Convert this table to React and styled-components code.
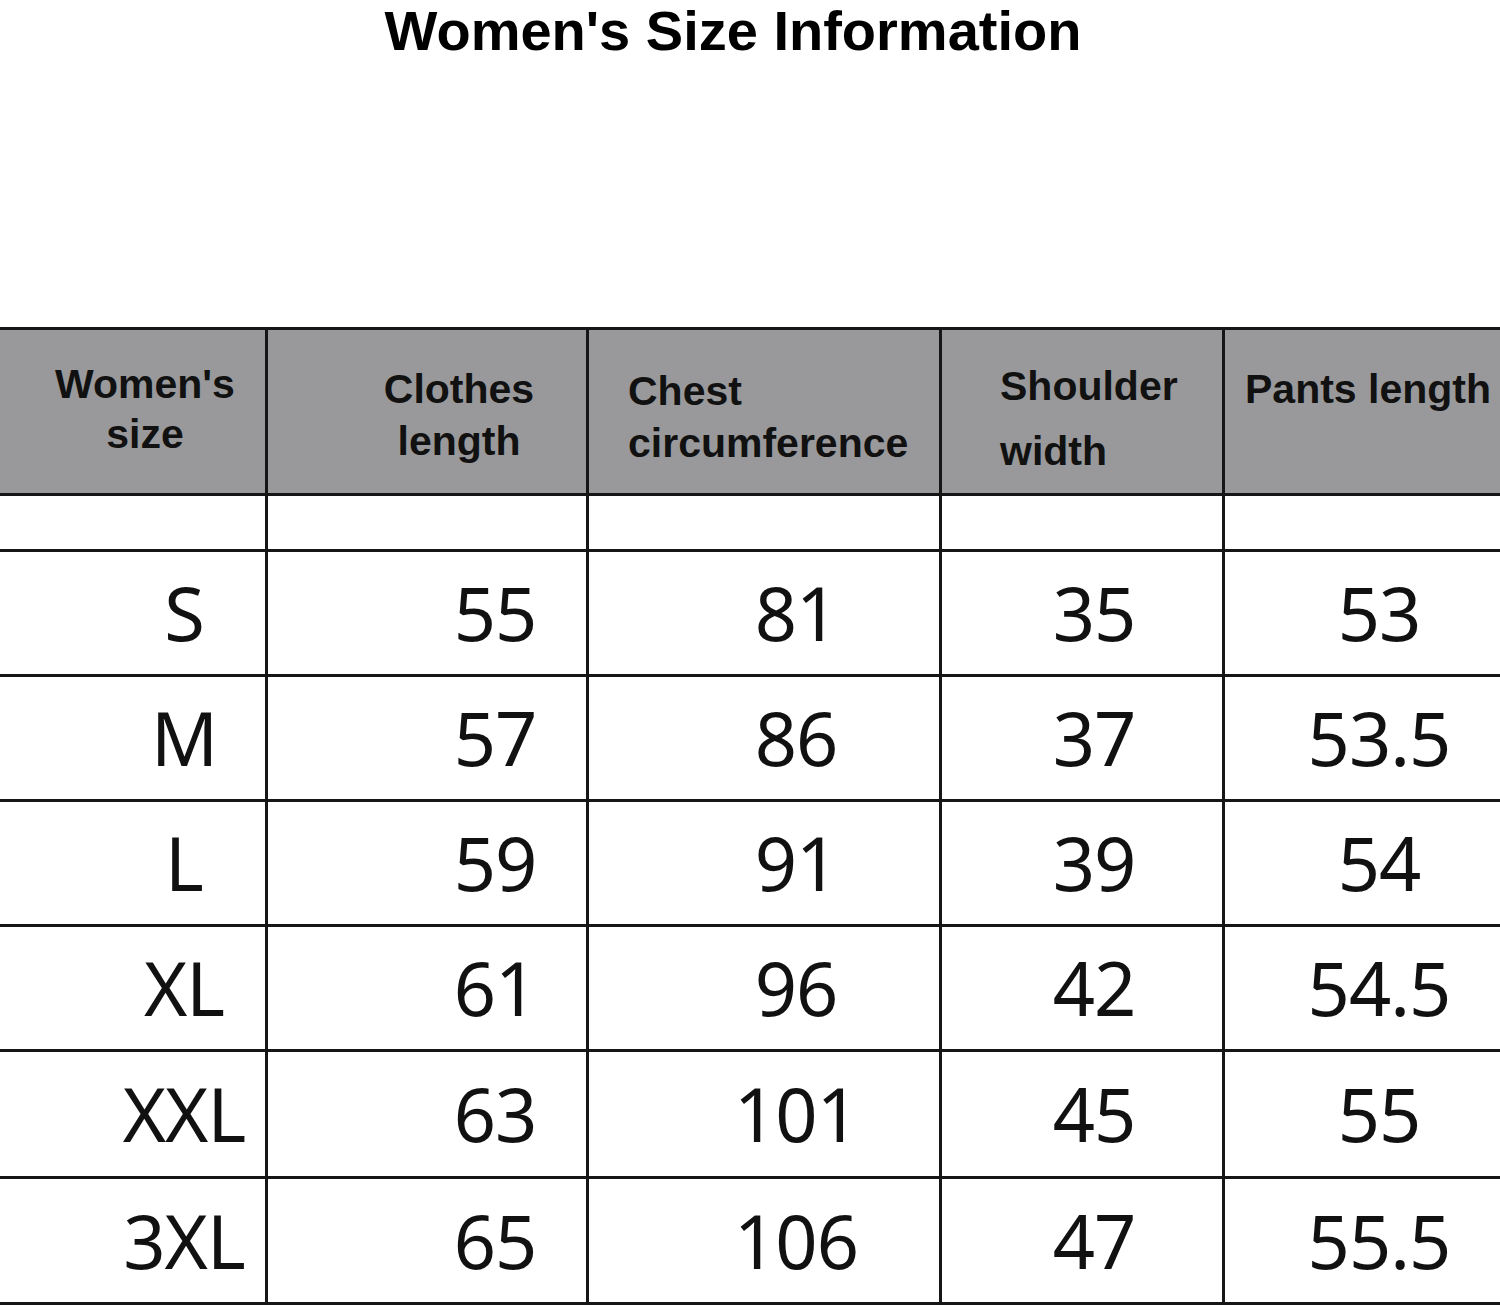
import React from 'react';
import styled, { createGlobalStyle } from 'styled-components';

const GlobalStyle = createGlobalStyle`
  body {
    margin: 0;
    background: #fff;
    font-family: "Liberation Sans", Arial, sans-serif;
  }
`;

const Page = styled.div`
  width: 1500px;
  height: 1313px;
  background: #fff;
  overflow: hidden;
`;

const Title = styled.h1`
  margin: 0;
  height: 62px;
  line-height: 62px;
  font-size: 56px;
  font-weight: 700;
  color: #000;
  text-align: center;
  padding-right: 34px;
`;

const Table = styled.div`
  margin-top: 265px;
  display: grid;
  grid-template-columns: 265px 318px 350px 280px 275px;
  grid-template-rows: 163px 53px 122px 122px 122px 122px 124px 123px;
  gap: 3px;
  padding: 3px 0;
  background: #161616;
`;

const HeadCell = styled.div`
  background: #99999b;
  color: #111;
  font-weight: 700;
  font-size: 41px;
  line-height: ${p => p.$lh}px;
  text-align: ${p => p.$align};
  padding: ${p => p.$top}px 0 0 ${p => p.$left}px;
  box-sizing: border-box;
  white-space: nowrap;
`;

const EmptyCell = styled.div`
  background: #fff;
`;

const ValueCell = styled.div`
  background: #fff;
  display: flex;
  align-items: center;
  justify-content: center;
  padding-left: ${p => p.$shift}px;
  box-sizing: border-box;
  font-family: "Noto Sans", "DejaVu Sans", sans-serif;
  font-size: 74px;
  line-height: 74px;
  color: #111;
  letter-spacing: -1px;
`;

const headers = [
  { lines: ["Women's", 'size'], align: 'center', left: 25, top: 29, lh: 50 },
  { lines: ['Clothes', 'length'], align: 'center', left: 64, top: 33, lh: 52 },
  { lines: ['Chest', 'circumference'], align: 'left', left: 39, top: 35, lh: 52 },
  { lines: ['Shoulder', 'width'], align: 'left', left: 58, top: 24, lh: 65 },
  { lines: ['Pants length'], align: 'left', left: 20, top: 33, lh: 52 },
];

const shifts = [103, 136, 64, 24, 33];

const rows = [
  ['S', '55', '81', '35', '53'],
  ['M', '57', '86', '37', '53.5'],
  ['L', '59', '91', '39', '54'],
  ['XL', '61', '96', '42', '54.5'],
  ['XXL', '63', '101', '45', '55'],
  ['3XL', '65', '106', '47', '55.5'],
];

export default function App() {
  return (
    <Page>
      <GlobalStyle />
      <Title>Women's Size Information</Title>
      <Table>
        {headers.map((h, i) => (
          <HeadCell key={'h' + i} $align={h.align} $left={h.left} $top={h.top} $lh={h.lh}>
            {h.lines.map((l, j) => (
              <div key={j}>{l}</div>
            ))}
          </HeadCell>
        ))}
        {headers.map((_, i) => (
          <EmptyCell key={'e' + i} />
        ))}
        {rows.map((row, r) =>
          row.map((v, c) => (
            <ValueCell key={r + '-' + c} $shift={shifts[c]}>
              {v}
            </ValueCell>
          )),
        )}
      </Table>
    </Page>
  );
}
